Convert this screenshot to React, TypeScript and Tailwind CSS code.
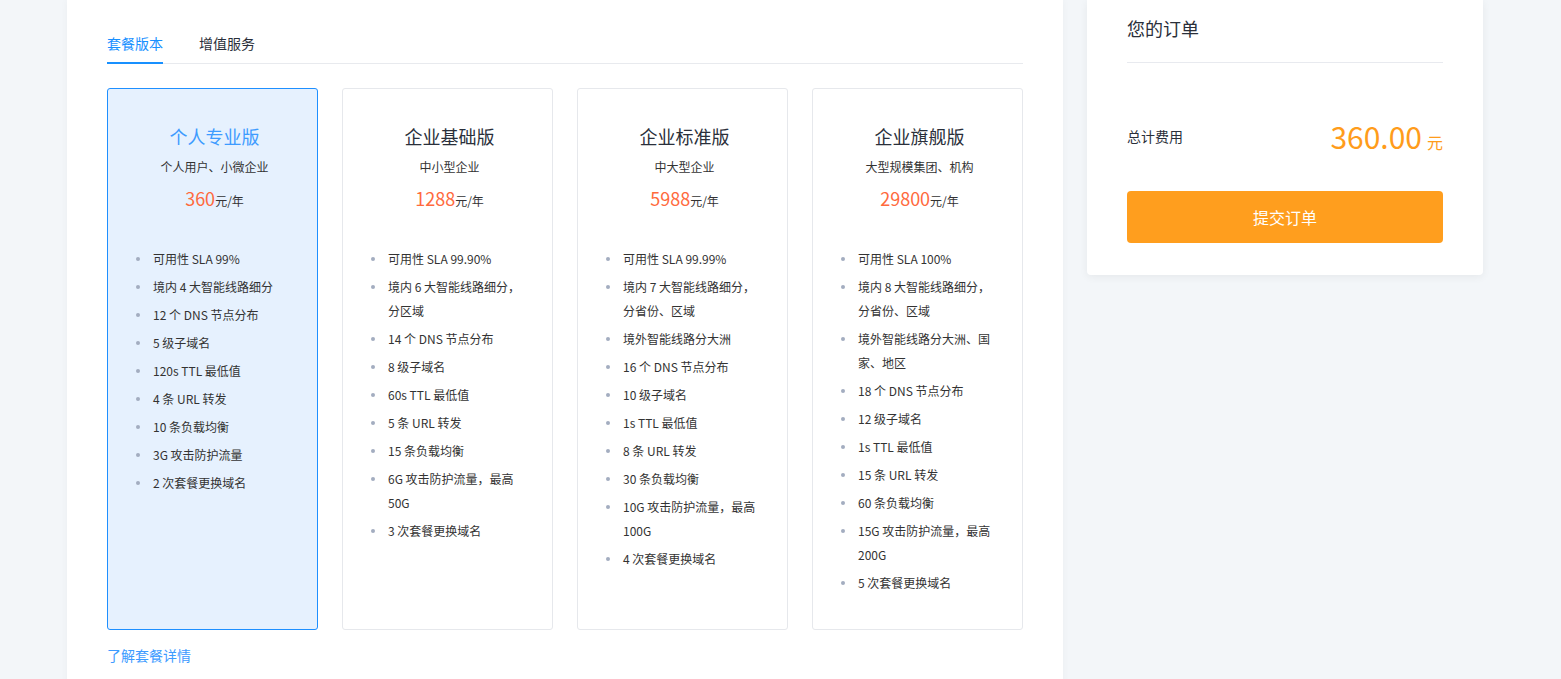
const plans = [
  {
    name: "个人专业版",
    audience: "个人用户、小微企业",
    price: "360",
    features: [
      "可用性 SLA 99%",
      "境内 4 大智能线路细分",
      "12 个 DNS 节点分布",
      "5 级子域名",
      "120s TTL 最低值",
      "4 条 URL 转发",
      "10 条负载均衡",
      "3G 攻击防护流量",
      "2 次套餐更换域名",
    ],
  },
  {
    name: "企业基础版",
    audience: "中小型企业",
    price: "1288",
    features: [
      "可用性 SLA 99.90%",
      "境内 6 大智能线路细分，分区域",
      "14 个 DNS 节点分布",
      "8 级子域名",
      "60s TTL 最低值",
      "5 条 URL 转发",
      "15 条负载均衡",
      "6G 攻击防护流量，最高 50G",
      "3 次套餐更换域名",
    ],
  },
  {
    name: "企业标准版",
    audience: "中大型企业",
    price: "5988",
    features: [
      "可用性 SLA 99.99%",
      "境内 7 大智能线路细分，分省份、区域",
      "境外智能线路分大洲",
      "16 个 DNS 节点分布",
      "10 级子域名",
      "1s TTL 最低值",
      "8 条 URL 转发",
      "30 条负载均衡",
      "10G 攻击防护流量，最高 100G",
      "4 次套餐更换域名",
    ],
  },
  {
    name: "企业旗舰版",
    audience: "大型规模集团、机构",
    price: "29800",
    features: [
      "可用性 SLA 100%",
      "境内 8 大智能线路细分，分省份、区域",
      "境外智能线路分大洲、国家、地区",
      "18 个 DNS 节点分布",
      "12 级子域名",
      "1s TTL 最低值",
      "15 条 URL 转发",
      "60 条负载均衡",
      "15G 攻击防护流量，最高 200G",
      "5 次套餐更换域名",
    ],
  },
];

type Plan = (typeof plans)[number];

function PlanCard({ plan, active }: { plan: Plan; active: boolean }) {
  return (
    <div
      className={
        active
          ? "h-[542px] rounded-[3px] border border-[#1e8fff] bg-[#e6f1fe] pt-[34px] pl-[28px] pr-[24px]"
          : "h-[542px] rounded-[3px] border border-[#e6e8ec] bg-white pt-[34px] pl-[28px] pr-[24px]"
      }
    >
      <div
        className={
          active
            ? "text-center text-[18px] leading-[26px] text-[#3d9bff]"
            : "text-center text-[18px] leading-[26px] text-[#2a2f3a]"
        }
      >
        {plan.name}
      </div>
      <div className="mt-[8px] text-center text-[12px] leading-[20px] text-[#333]">
        {plan.audience}
      </div>
      <div className="mt-[8px] text-center leading-[26px]">
        <span className="text-[18px] text-[#ff6a3d]">{plan.price}</span>
        <span className="text-[12px] text-[#333]">元/年</span>
      </div>
      <ul className="mt-[33px] flex flex-col gap-1">
        {plan.features.map((f) => (
          <li key={f} className="flex items-start text-[12px] leading-[24px] text-[#333]">
            <span className="mt-[10px] h-[4px] w-[4px] shrink-0 rounded-full bg-[#a3adc0]" />
            <span className="ml-[13px]">{f}</span>
          </li>
        ))}
      </ul>
    </div>
  );
}

export default function App() {
  return (
    <div
      className="flex min-h-screen gap-6 bg-[#f3f6f9] pl-[67px]"
      style={{ fontFamily: '"Noto Sans CJK SC", "Noto Sans", sans-serif' }}
    >
      <div className="w-[996px] bg-white px-10 pt-[32px] pb-10 shadow-[0_0_8px_rgba(0,0,0,0.04)]">
        <div className="flex gap-9 border-b border-[#e8eaee]">
          <div className="-mb-px border-b-2 border-[#1890ff] pb-[8px] text-[14px] leading-[22px] text-[#1890ff]">
            套餐版本
          </div>
          <div className="-mb-px border-b-2 border-transparent pb-[8px] text-[14px] leading-[22px] text-[#2a2f3a]">
            增值服务
          </div>
        </div>
        <div className="mt-6 grid grid-cols-[repeat(4,211px)] gap-6">
          {plans.map((p, i) => (
            <PlanCard key={p.name} plan={p} active={i === 0} />
          ))}
        </div>
        <div className="mt-[14px] text-[14px] leading-[22px] text-[#3d9bff]">
          了解套餐详情
        </div>
      </div>

      <div className="h-fit w-[396px] rounded-b-[4px] bg-white px-10 pt-[15px] pb-[32px] shadow-[0_2px_8px_rgba(0,0,0,0.06)]">
        <div className="border-b border-[#e8eaef] pb-[21px] text-[18px] leading-[26px] text-[#2a2f3a]">
          您的订单
        </div>
        <div className="mt-[55px] flex items-center justify-between">
          <span className="text-[14px] leading-[22px] text-[#2a2f3a]">总计费用</span>
          <span className="flex items-baseline text-[#ff9c1b]">
            <span className="text-[30px] leading-[36px]">360.00</span>
            <span className="ml-[5px] text-[16px]">元</span>
          </span>
        </div>
        <button className="mt-[37px] flex h-[52px] w-full items-center justify-center rounded-[4px] bg-[#ff9e1e] text-[16px] text-white">
          提交订单
        </button>
      </div>
    </div>
  );
}
